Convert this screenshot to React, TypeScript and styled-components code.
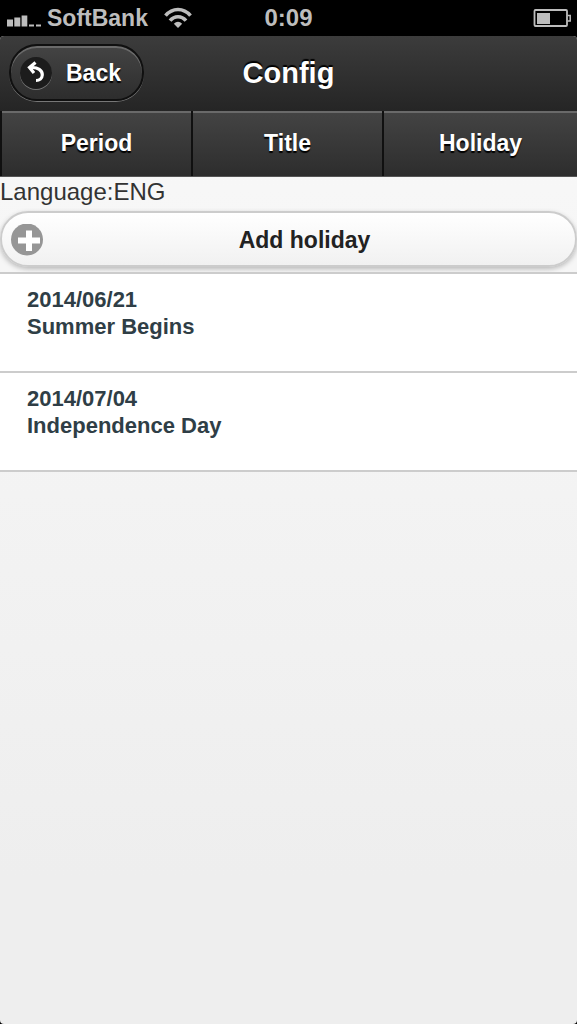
import React from 'react';
import styled, { createGlobalStyle } from 'styled-components';

const GlobalStyle = createGlobalStyle`
  * { box-sizing: border-box; }
  html { background: #000; }
  body {
    margin: 0;
    font-family: "Liberation Sans", Helvetica, Arial, sans-serif;
    background: #000;
  }
`;

const Screen = styled.div`
  display: flex;
  flex-direction: column;
  min-height: 100vh;
`;

const StatusBar = styled.div`
  display: grid;
  grid-template-columns: 1fr auto 1fr;
  align-items: center;
  height: 36px;
  padding: 0 6px;
  background: #000;
  color: #bdbdbd;
  font-size: 24px;
  font-weight: bold;
  line-height: 36px;
`;

const Carrier = styled.div`
  display: flex;
  align-items: center;
  gap: 6px;
  font-size: 23px;

  svg + span { margin-right: 10px; }
`;

const BatterySlot = styled.div`
  display: flex;
  justify-content: flex-end;
`;

const Page = styled.div`
  flex: 1;
  display: flex;
  flex-direction: column;
  border-radius: 4px;
  overflow: hidden;
  background: linear-gradient(#f9f9f9, #eeeeee 85%);
`;

const Header = styled.header`
  display: grid;
  grid-template-columns: 1fr auto 1fr;
  align-items: center;
  height: 75px;
  padding: 0 9px 2px;
  background: linear-gradient(#3c3c3c, #252525);
  color: #fff;
`;

const Heading = styled.h1`
  margin: 0;
  font-size: 29px;
  line-height: 36px;
  text-shadow: 0 -2px 1px #000;
`;

const BackButton = styled.button`
  justify-self: start;
  display: flex;
  align-items: center;
  gap: 14px;
  height: 57px;
  padding: 0 21px 0 9px;
  border: 2px solid #101010;
  border-radius: 28px;
  background: linear-gradient(#444, #2d2d2d);
  box-shadow: inset 0 2px 0 #6a6a6a, 0 1px 0 #777;
  color: #fff;
  font: bold 23px/28px "Liberation Sans", Helvetica, Arial, sans-serif;
  text-shadow: 0 2px 1px #000;
`;

const BackDisc = styled.span`
  display: flex;
  width: 32px;
  height: 32px;
  border-radius: 50%;
  background: #1c1c1c;
  box-shadow: 0 1px 0 #777;
`;

const NavBar = styled.nav`
  display: grid;
  grid-template-columns: 49fr 49fr 50fr;
  height: 66px;
  background: #141414;
  border-bottom: 1px solid #555;
`;

const NavLink = styled.a`
  display: flex;
  align-items: center;
  justify-content: center;
  border-left: 2px solid #101010;
  background: linear-gradient(#444, #2d2d2d);
  box-shadow: inset 0 2px 0 #6a6a6a;
  color: #fff;
  font-size: 23px;
  font-weight: bold;
  text-decoration: none;
  text-shadow: 0 2px 1px #000;
`;

const Language = styled.p`
  margin: 0;
  padding-top: 1px;
  color: #333;
  font-size: 24px;
  line-height: 28px;
`;

const AddButton = styled.button`
  display: grid;
  grid-template-columns: 32px 1fr;
  align-items: center;
  width: 100%;
  height: 56px;
  margin: 5px 0;
  padding: 2px 9px 0;
  border: 2px solid #ccc;
  border-radius: 28px;
  background: linear-gradient(#fff, #f1f1f1);
  box-shadow: 0 2px 5px rgba(0, 0, 0, 0.25);
  color: #222;
  font: bold 23px/28px "Liberation Sans", Helvetica, Arial, sans-serif;
`;

const HolidayList = styled.ul`
  margin: 0;
  padding: 0;
  list-style: none;
  border-top: 2px solid #ccc;
`;

const HolidayItem = styled.li`
  height: 99px;
  padding: 12px 27px;
  border-bottom: 2px solid #ccc;
  background: #fff;
  color: #2f3e46;
  font-size: 22px;
  font-weight: bold;
  line-height: 27px;
`;

const holidays = [
  { date: '2014/06/21', name: 'Summer Begins' },
  { date: '2014/07/04', name: 'Independence Day' },
];

const SignalIcon = () => (
  <svg width="35" height="19" viewBox="0 0 35 19" fill="#bdbdbd" aria-hidden="true">
    <rect x="1" y="10.500" width="6" height="7" />
    <rect x="8.300" y="8.500" width="6" height="9" />
    <rect x="15.600" y="6.500" width="5.700" height="11" />
    <rect x="23" y="15.500" width="5" height="2" />
    <rect x="30" y="15.500" width="5" height="2" />
  </svg>
);

const WifiIcon = () => (
  <svg width="28" height="22" viewBox="0 0 28 22" fill="none" stroke="#bdbdbd" strokeWidth="3.6" aria-hidden="true">
    <path d="M1.500 8.700C8.500 .5 19.500 .5 26.500 8.700" />
    <path d="M6 13.700C10.500 8.400 17.500 8.400 22 13.700" />
    <path d="M14 21L9.800 16.800Q14 12.700 18.200 16.800Z" fill="#bdbdbd" stroke="none" />
  </svg>
);

const BatteryIcon = () => (
  <svg width="38" height="18" viewBox="0 0 38 18" fill="none" stroke="#bdbdbd" aria-hidden="true">
    <rect x="1.500" y="1" width="32.500" height="16" rx="1" strokeWidth="1.800" />
    <rect x="4" y="4" width="13" height="11" fill="#bdbdbd" stroke="none" />
    <path d="M34.500 6.500H37.200V12H34.500" strokeWidth="1.500" />
  </svg>
);

const BackIcon = () => (
  <svg width="32" height="32" viewBox="0 0 32 32" fill="none" stroke="#fff" strokeWidth="3.200" aria-hidden="true">
    <path d="M15.500 5.500L9.500 10.500L14 16" />
    <path d="M10.500 10.600C18 9.800 22.500 13.500 22.300 18C22.100 21.500 19.500 23.500 16 23.500" />
  </svg>
);

const PlusIcon = () => (
  <svg width="32" height="32" viewBox="0 0 32 32" aria-hidden="true">
    <circle cx="16" cy="15.500" r="16" fill="#969696" />
    <path d="M15 6.500H21V13.500H29V19.500H21V27H15V19.500H7V13.500H15Z" fill="#fff" />
  </svg>
);

export default function App() {
  return (
    <>
      <GlobalStyle />
      <Screen>
        <StatusBar>
          <Carrier>
            <SignalIcon />
            <span>SoftBank</span>
            <WifiIcon />
          </Carrier>
          <span>0:09</span>
          <BatterySlot>
            <BatteryIcon />
          </BatterySlot>
        </StatusBar>
        <Page>
          <Header>
            <BackButton type="button">
              <BackDisc>
                <BackIcon />
              </BackDisc>
              Back
            </BackButton>
            <Heading>Config</Heading>
          </Header>
          <NavBar>
            <NavLink href="#period">Period</NavLink>
            <NavLink href="#title">Title</NavLink>
            <NavLink href="#holiday">Holiday</NavLink>
          </NavBar>
          <main>
            <Language>Language:ENG</Language>
            <AddButton type="button">
              <PlusIcon />
              <span>Add holiday</span>
            </AddButton>
            <HolidayList>
              {holidays.map((holiday) => (
                <HolidayItem key={holiday.date}>
                  <div>{holiday.date}</div>
                  <div>{holiday.name}</div>
                </HolidayItem>
              ))}
            </HolidayList>
          </main>
        </Page>
      </Screen>
    </>
  );
}
